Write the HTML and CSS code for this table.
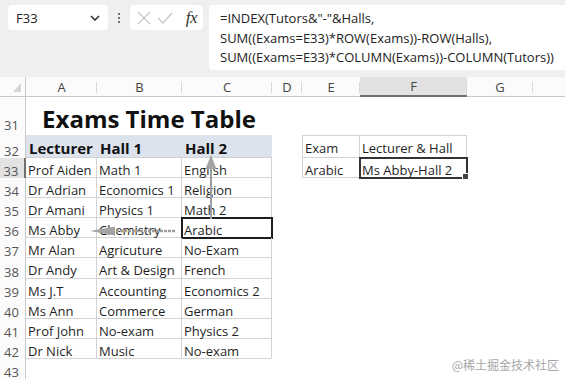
FILE: index.html
```html
<!DOCTYPE html>
<html>
<head>
<meta charset="utf-8">
<link rel="stylesheet" href="styles.css">
</head>
<body>
<div class="app">
  <div class="toolbar">
    <div class="namebox"><span>F33</span>
      <svg class="chev" width="10" height="6" viewBox="0 0 10 6"><path d="M1 1 L5 5 L9 1" fill="none" stroke="#333" stroke-width="1.6"/></svg>
    </div>
    <div class="dots"><i></i><i></i><i></i></div>
    <div class="fnbox">
      <svg width="14" height="14" viewBox="0 0 14 14"><path d="M1 1 L13 13 M13 1 L1 13" stroke="#c8c8c8" stroke-width="1.3"/></svg>
      <svg width="16" height="14" viewBox="0 0 16 14"><path d="M1 7 L6 12 L15 2" fill="none" stroke="#c8c8c8" stroke-width="1.3"/></svg>
      <span class="fx">fx</span>
    </div>
    <div class="formula">=INDEX(Tutors&amp;"-"&amp;Halls,
SUM((Exams=E33)*ROW(Exams))-ROW(Halls),
SUM((Exams=E33)*COLUMN(Exams))-COLUMN(Tutors))</div>
  </div>

  <div class="sheet">
    <div class="corner"><svg width="8" height="9" viewBox="0 0 8 9"><path d="M8 0 L8 9 L0 9 Z" fill="#d6d6d6"/></svg></div>
    <div class="ch">A</div><div class="ch">B</div><div class="ch">C</div><div class="ch">D</div><div class="ch">E</div><div class="ch sel">F</div><div class="ch">G</div><div class="ch last"></div>

    <div class="rh r31">31</div><div class="title">Exams Time Table</div><div class="rest"></div>

    <div class="rh">32</div><div class="band">Lecturer</div><div class="band">Hall 1</div><div class="band">Hall 2</div><div class="e"></div><div class="t tl">Exam</div><div class="t tl">Lecturer &amp; Hall</div><div class="e2"></div>

    <div class="rh sel">33</div><div class="c">Prof Aiden</div><div class="c">Math 1</div><div class="c">English</div><div class="e"></div><div class="t">Arabic</div><div class="t active">Ms Abby-Hall 2</div><div class="e2"></div>

    <div class="rh">34</div><div class="c">Dr Adrian</div><div class="c">Economics 1</div><div class="c">Religion</div><div class="rest"></div>
    <div class="rh">35</div><div class="c">Dr Amani</div><div class="c">Physics 1</div><div class="c">Math 2</div><div class="rest"></div>
    <div class="rh">36</div><div class="c">Ms Abby</div><div class="c">Chemistry</div><div class="c boxed">Arabic</div><div class="rest"></div>
    <div class="rh">37</div><div class="c">Mr Alan</div><div class="c">Agricuture</div><div class="c">No-Exam</div><div class="rest"></div>
    <div class="rh">38</div><div class="c">Dr Andy</div><div class="c">Art &amp; Design</div><div class="c">French</div><div class="rest"></div>
    <div class="rh">39</div><div class="c">Ms J.T</div><div class="c">Accounting</div><div class="c">Economics 2</div><div class="rest"></div>
    <div class="rh">40</div><div class="c">Ms Ann</div><div class="c">Commerce</div><div class="c">German</div><div class="rest"></div>
    <div class="rh">41</div><div class="c">Prof John</div><div class="c">No-exam</div><div class="c">Physics 2</div><div class="rest"></div>
    <div class="rh">42</div><div class="c">Dr Nick</div><div class="c">Music</div><div class="c">No-exam</div><div class="rest"></div>
    <div class="rh">43</div><div class="rest wide"></div>
  </div>

  <svg class="arrows" width="565" height="380" viewBox="0 0 565 380">
    <line x1="211" y1="219" x2="211" y2="166" stroke="#9d9d9d" stroke-width="2"/>
    <polygon points="211,155 205.5,169 216.5,169" fill="#a3a3a3"/>
    <line x1="175" y1="231" x2="110" y2="231" stroke="#9d9d9d" stroke-width="2.4" stroke-dasharray="3 1"/>
    <polygon points="90,231 115,226.5 115,235.5" fill="#a3a3a3"/>
  </svg>

  <div class="watermark">@稀土掘金技术社区</div>
</div>
</body>
</html>
```

FILE: styles.css
```css
body {
  margin: 0;
  background: #fff;
  font-family: "Open Sans", "Noto Sans", sans-serif;
  color: #222;
}

.app {
  position: relative;
  width: 565px;
  height: 380px;
  overflow: hidden;
}

/* ---------- toolbar ---------- */
.toolbar {
  display: flex;
  align-items: flex-start;
  height: 77px;
  box-sizing: border-box;
  padding: 5px 0 0 8px;
  background: #efefef;
}

.namebox {
  width: 100px;
  height: 25px;
  box-sizing: border-box;
  padding: 0 8px 0 8px;
  background: #fff;
  border-radius: 4px;
  display: flex;
  align-items: center;
  justify-content: space-between;
  font-size: 13px;
  color: #222;
}

.dots {
  width: 22px;
  height: 25px;
  display: flex;
  flex-direction: column;
  align-items: center;
  justify-content: center;
  gap: 2px;
}
.dots i {
  display: block;
  width: 2px;
  height: 2px;
  background: #444;
  border-radius: 1px;
}

.fnbox {
  width: 73px;
  height: 25px;
  box-sizing: border-box;
  background: #fff;
  border-radius: 4px;
  display: flex;
  align-items: center;
  padding: 0 6px 0 7px;
  gap: 6px;
}
.fx {
  margin-left: auto;
  font-family: "Liberation Serif", serif;
  font-style: italic;
  font-size: 17px;
  color: #333;
  letter-spacing: -0.5px;
}

.formula {
  flex: 1;
  margin-left: 6px;
  height: 65px;
  box-sizing: border-box;
  padding: 4px 0 0 11px;
  background: #fff;
  border-radius: 4px 0 0 4px;
  font-size: 13px;
  line-height: 19.5px;
  white-space: pre;
  color: #222;
}

/* ---------- sheet ---------- */
.sheet {
  display: grid;
  grid-template-columns: 26px 71px 85px 90px 30px 58px 107px 66px 1fr;
  grid-template-rows: 20px 38px 23px repeat(10, 20.1px) 20px;
  font-size: 13px;
}

.corner {
  border-right: 1px solid #c9c9c9;
  border-bottom: 1px solid #c9c9c9;
  display: flex;
  align-items: flex-end;
  justify-content: flex-end;
  padding: 0 4px 4px 0;
  box-sizing: border-box;
  background: #fbfbfb;
}

.ch {
  position: relative;
  background: #fbfbfb;
  border-bottom: 1px solid #c9c9c9;
  text-align: center;
  line-height: 20px;
  color: #444;
  font-size: 13px;
}
.ch::after {
  content: "";
  position: absolute;
  right: 0;
  bottom: 3px;
  width: 1px;
  height: 11px;
  background: #d8d8d8;
}
.ch.last::after { display: none; }
.ch.sel {
  background: #e2e2e2;
  border-bottom: 2px solid #6f6f6f;
  line-height: 19px;
}

.rh {
  grid-column: 1;
  background: #fbfbfb;
  border-right: 1px solid #c9c9c9;
  color: #555;
  font-size: 13px;
  display: flex;
  align-items: flex-end;
  justify-content: center;
  padding-right: 2px;
  line-height: 14px;
}
.rh.r31 { padding-bottom: 3px; }
.rh.sel {
  background: #e2e2e2;
  border-right: 2px solid #6f6f6f;
}

.title {
  grid-column: span 3;
  text-align: center;
  font-weight: 700;
  font-size: 24px;
  line-height: 38px;
  color: #111;
  padding-top: 2.5px;
  white-space: nowrap;
}

.rest { grid-column: span 5; }
.rest.wide { grid-column: span 8; }

.band {
  background: #dde3ec;
  font-weight: 700;
  font-size: 15px;
  padding: 4px 0 0 3px;
  line-height: 19px;
  color: #111;
  border-bottom: 1px solid #d0d0d0;
  white-space: nowrap;
}

.c {
  box-sizing: border-box;
  border-right: 1px solid #d3d3d3;
  border-bottom: 1px solid #d3d3d3;
  padding: 3px 0 0 2px;
  line-height: 19px;
  white-space: nowrap;
  color: #1f1f1f;
}

.t {
  box-sizing: border-box;
  border-right: 1px solid #d3d3d3;
  border-bottom: 1px solid #d3d3d3;
  border-left: 1px solid #d3d3d3;
  padding: 3px 0 0 2px;
  line-height: 19px;
  white-space: nowrap;
  color: #1f1f1f;
}
.t + .t { border-left: none; }
.t.tl { border-top: 1px solid #d3d3d3; padding-top: 3px; }

.boxed {
  outline: 2px solid #1e1e1e;
  outline-offset: -1px;
}

.active {
  position: relative;
  outline: 2px solid #333;
  outline-offset: -1px;
}
.active::after {
  content: "";
  position: absolute;
  right: -3px;
  bottom: -3px;
  width: 5px;
  height: 5px;
  background: #444;
  border: 1px solid #fff;
}

.arrows {
  position: absolute;
  left: 0;
  top: 0;
  pointer-events: none;
}

.watermark {
  position: absolute;
  right: 6px;
  bottom: 7px;
  font-family: "Noto Sans CJK SC", sans-serif;
  font-size: 12px;
  color: #a6a6a6;
}
```
